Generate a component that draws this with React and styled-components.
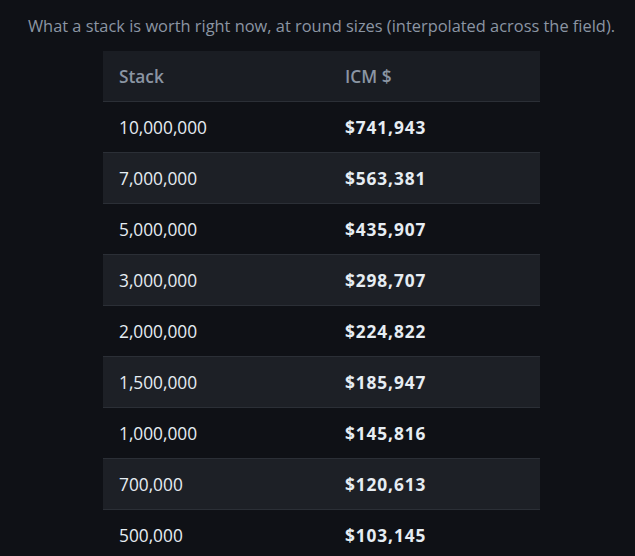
import styled, { createGlobalStyle } from "styled-components";

const GlobalStyle = createGlobalStyle`
  html, body {
    margin: 0;
    background: #0f1116;
  }
  body {
    font-family: "Open Sans", "Noto Sans", sans-serif;
    color: #e6edf3;
  }
`;

const Page = styled.div`
  display: flex;
  flex-direction: column;
  align-items: center;
  padding: 14px 0 0 8px;
  min-height: 556px;
  box-sizing: border-box;
`;

const Caption = styled.p`
  margin: 0 0 13px;
  font-size: 16.4px;
  line-height: 24px;
  color: #8b95a3;
  text-align: center;
  white-space: nowrap;
`;

const Table = styled.table`
  width: 437px;
  border-collapse: collapse;
  font-size: 17.3px;
`;

const HeadCell = styled.th`
  height: 50px;
  padding: 0 16px;
  text-align: left;
  font-weight: 600;
  color: #8b95a3;
  background: #1a1d23;
  border-bottom: 1px solid #2b2f36;
  width: ${(p) => p.$width || "auto"};
`;

const Row = styled.tr`
  background: ${(p) => (p.$striped ? "#1d2026" : "transparent")};
  border-bottom: 1px solid #2b2f36;
`;

const Cell = styled.td`
  height: 50px;
  padding: 0 16px;
  color: #e6edf3;
  font-weight: ${(p) => (p.$bold ? 700 : 400)};
  letter-spacing: ${(p) => (p.$bold ? "0.9px" : "0")};
`;

const rows = [
  ["10,000,000", "$741,943"],
  ["7,000,000", "$563,381"],
  ["5,000,000", "$435,907"],
  ["3,000,000", "$298,707"],
  ["2,000,000", "$224,822"],
  ["1,500,000", "$185,947"],
  ["1,000,000", "$145,816"],
  ["700,000", "$120,613"],
  ["500,000", "$103,145"],
];

const App = () => {
  return (
    <>
      <GlobalStyle />
      <Page>
        <Caption>
          What a stack is worth right now, at round sizes (interpolated across
          the field).
        </Caption>
        <Table>
          <thead>
            <tr>
              <HeadCell $width="194px">Stack</HeadCell>
              <HeadCell>ICM $</HeadCell>
            </tr>
          </thead>
          <tbody>
            {rows.map(([stack, value], i) => (
              <Row key={stack} $striped={i % 2 === 1}>
                <Cell>{stack}</Cell>
                <Cell $bold>{value}</Cell>
              </Row>
            ))}
          </tbody>
        </Table>
      </Page>
    </>
  );
};

export default App;
